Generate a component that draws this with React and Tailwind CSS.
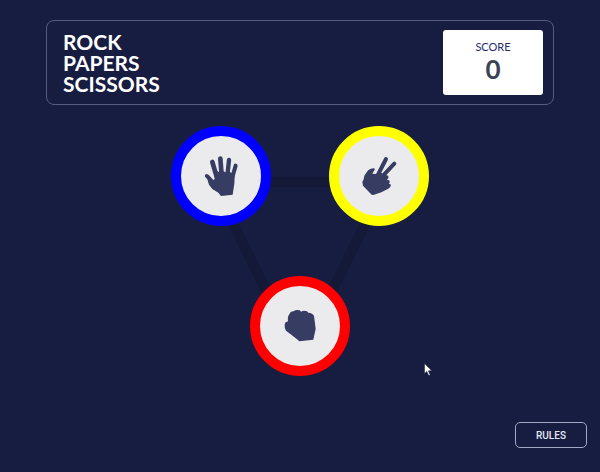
import React from "react";

function PaperIcon() {
  return (
    <svg viewBox="104 101 132 132" className="h-11 w-11" aria-hidden="true">
      <g fill="none" stroke="#363c62" strokeLinecap="round">
        <path d="M144 125L156 166" strokeWidth="14" />
        <path d="M168 115L172 165" strokeWidth="14" />
        <path d="M194 119L189 166" strokeWidth="13" />
        <path d="M214 136L203 174" strokeWidth="12" />
      </g>
      <path
        fill="#363c62"
        d="M148 156L158 152L168 157L178 153L186 157L196 155L208 160L211 170L210 190L205 223L170 227L162 217L144 206L134 193L129 177L122 169Q121 161 127 161Q134 162 139 170L147 179L151 176Z"
      />
    </svg>
  );
}

function ScissorsIcon() {
  return (
    <svg viewBox="94 101 132 132" className="h-11 w-11" aria-hidden="true">
      <g fill="none" stroke="#363c62" strokeLinecap="round">
        <path d="M181 116L158 161" strokeWidth="12" />
        <path d="M206 130L170 168" strokeWidth="12" />
      </g>
      <path
        fill="#363c62"
        d="M124 154Q130 145 146 144Q150 148 144 153L140 160L150 161L163 154L174 163L184 165Q191 168 187 175L183 179L191 180Q194 185 190 190L196 193Q195 202 188 205L167 216L143 224L138 223L112 196L110 185L114 177L116 166Z"
      />
    </svg>
  );
}

function RockIcon() {
  return (
    <svg viewBox="99 102 132 132" className="h-11 w-11" aria-hidden="true">
      <path
        fill="#363c62"
        d="M133 133Q137 122 146 124Q152 118 164 121L168 125Q176 120 186 124L190 128Q201 128 207 137L209 153L212 177L206 204L205 209L163 214L156 208L139 194L123 182Q118 175 119 163Q120 156 129 154Q127 140 133 133Z"
      />
    </svg>
  );
}

function Choice({ label, ring, className = "", children }) {
  return (
    <button
      type="button"
      aria-label={label}
      className={`relative flex h-[100px] w-[100px] items-center justify-center rounded-full border-[10px] bg-[#ebebed] ${ring} ${className}`}
    >
      {children}
    </button>
  );
}

export default function App() {
  return (
    <div className="flex min-h-screen flex-col bg-[#171d41] pt-5 pb-6 font-['Lato',sans-serif]">
      <header className="mx-[46px] flex items-center justify-between rounded-lg border border-[#565c80] py-[9px] pr-[10px] pl-4">
        <h1 className="text-[21px] leading-[21px] font-bold text-white">
          ROCK
          <br />
          PAPERS
          <br />
          SCISSORS
        </h1>
        <div className="flex h-[65px] w-[100px] flex-col items-center justify-center rounded-[3px] bg-white">
          <span className="text-[11px] leading-3 text-[#262c6c]">SCORE</span>
          <span className="text-[26px] leading-8 font-bold text-[#3b4457]">0</span>
        </div>
      </header>

      <main className="relative mx-auto mt-[21px] grid grid-cols-2 gap-x-[58px] gap-y-[50px]">
        <svg
          viewBox="0 0 258 250"
          className="absolute inset-0 h-full w-full"
          aria-hidden="true"
        >
          <path
            d="M42 56H215L128 232Z"
            fill="none"
            stroke="#131937"
            strokeWidth="10"
          />
        </svg>
        <Choice label="Paper" ring="border-[#0000ff]">
          <PaperIcon />
        </Choice>
        <Choice label="Scissors" ring="border-[#ffff00]">
          <ScissorsIcon />
        </Choice>
        <Choice
          label="Rock"
          ring="border-[#ff0000]"
          className="col-span-2 justify-self-center"
        >
          <RockIcon />
        </Choice>
      </main>

      <button
        type="button"
        className="mt-auto mr-[13px] h-[26px] w-[72px] self-end rounded-[5px] border border-[#a3a8c4] font-['Roboto',sans-serif] text-[10px] font-medium text-[#e4e7f3]"
      >
        RULES
      </button>

      <svg
        viewBox="0 0 9 14"
        className="absolute top-[363px] left-[424px] h-[14px] w-[9px]"
        aria-hidden="true"
      >
        <path
          d="M0.5 0.5V10.5L2.8 8.4L4.7 12.6L6.2 11.9L4.4 7.8H7.8Z"
          fill="#ffffff"
          stroke="#10152f"
          strokeWidth="0.5"
        />
      </svg>
    </div>
  );
}
